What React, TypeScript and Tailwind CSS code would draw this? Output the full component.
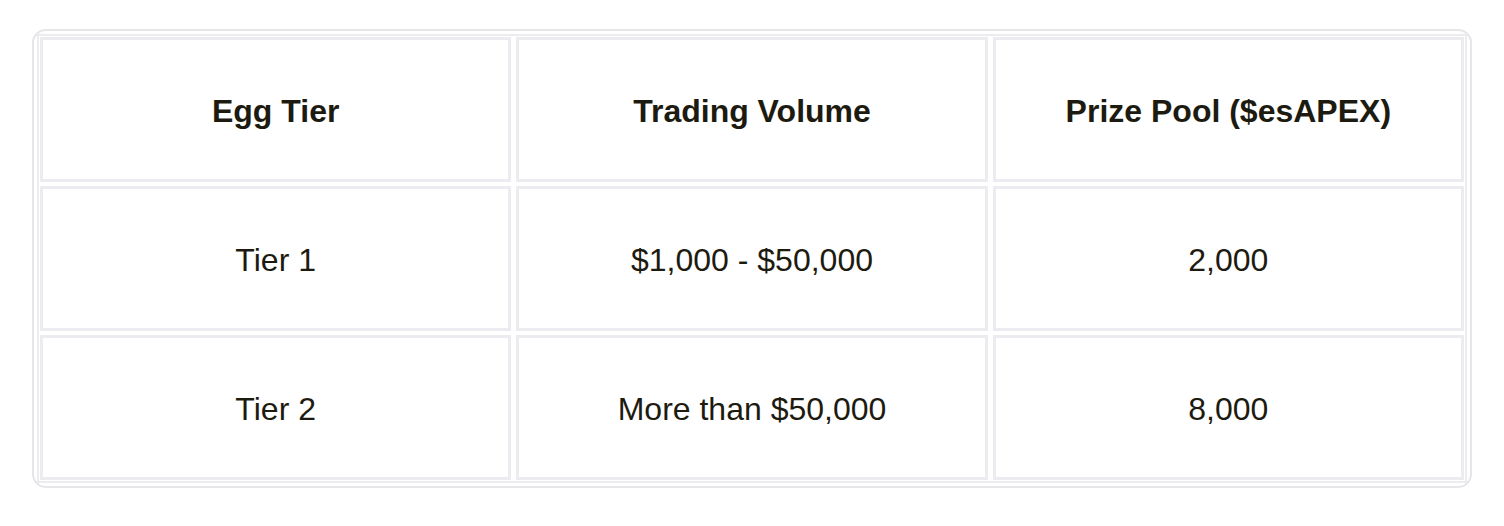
const headers = ['Egg Tier', 'Trading Volume', 'Prize Pool ($esAPEX)'];

const rows = [
  ['Tier 1', '$1,000 - $50,000', '2,000'],
  ['Tier 2', 'More than $50,000', '8,000'],
];

export default function App() {
  return (
    <div className="min-h-screen bg-white pt-[29px] px-[32px] font-['Liberation_Sans',Arial,sans-serif] text-[#1d1b10]">
      {/* Card frame */}
      <div className="rounded-[14px] border-2 border-[#e6e6e9] p-[3px]">
        {/* Table frame */}
        <div className="border-2 border-[#ebebf0] p-px grid grid-cols-3 gap-x-[5px] gap-y-[4px]">
          {headers.map((h) => (
            <div
              key={h}
              className="h-[145px] border-[3px] border-[#ebebf0] pt-[2px] flex items-center justify-center text-[32px] font-bold"
            >
              {h}
            </div>
          ))}
          {rows.map((row) =>
            row.map((cell, i) => (
              <div
                key={row[0] + i}
                className="h-[145px] border-[3px] border-[#ebebf0] pt-[2px] flex items-center justify-center text-[32px]"
              >
                {cell}
              </div>
            ))
          )}
        </div>
      </div>
    </div>
  );
}
